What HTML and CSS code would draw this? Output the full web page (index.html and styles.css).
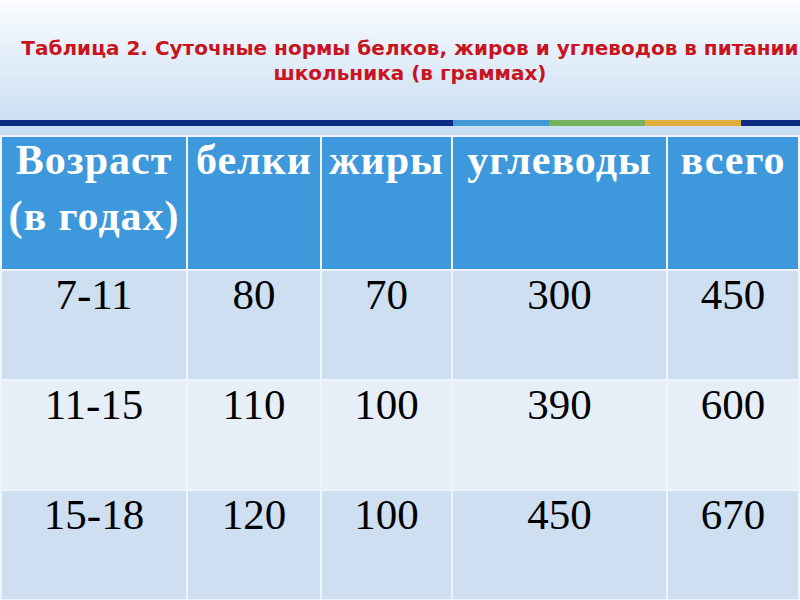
FILE: index.html
```html
<!DOCTYPE html>
<html lang="ru">
<head>
<meta charset="utf-8">
<title>Таблица 2</title>
<link rel="stylesheet" href="styles.css">
</head>
<body>
<div class="slide">
  <header class="top">
    <h1 class="title">Таблица 2. Суточные нормы белков, жиров и углеводов в питании<br>школьника (в граммах)</h1>
    <div class="stripe">
      <span class="seg navy1"></span>
      <span class="seg sky"></span>
      <span class="seg green"></span>
      <span class="seg gold"></span>
      <span class="seg navy2"></span>
    </div>
  </header>
  <table class="norms">
    <colgroup>
      <col class="c1"><col class="c2"><col class="c3"><col class="c4"><col class="c5">
    </colgroup>
    <thead>
      <tr class="head">
        <th><div class="hd">Возраст<br>(в годах)</div></th>
        <th><div class="hd">белки</div></th>
        <th><div class="hd">жиры</div></th>
        <th><div class="hd">углеводы</div></th>
        <th><div class="hd">всего</div></th>
      </tr>
    </thead>
    <tbody>
      <tr class="dark">
        <td>7-11</td><td>80</td><td>70</td><td>300</td><td>450</td>
      </tr>
      <tr class="light">
        <td>11-15</td><td>110</td><td>100</td><td>390</td><td>600</td>
      </tr>
      <tr class="dark">
        <td>15-18</td><td>120</td><td>100</td><td>450</td><td>670</td>
      </tr>
    </tbody>
  </table>
</div>
</body>
</html>
```

FILE: styles.css
```css
html, body {
  margin: 0;
  padding: 0;
}
body {
  width: 800px;
  height: 600px;
  overflow: hidden;
  background: #c8def3;
}
.slide {
  width: 800px;
  height: 600px;
  display: flex;
  flex-direction: column;
  background: linear-gradient(to bottom, #fbfdff 0px, #e8f1fa 45px, #cfe2f4 110px, #c8def3 135px, #c8def3 600px);
}
.top {
  height: 133px;
  display: flex;
  flex-direction: column;
  flex: none;
}
.title {
  margin: 0;
  padding: 36px 0 0 20px;
  height: 120px;
  box-sizing: border-box;
  flex: none;
  text-align: center;
  font-family: "DejaVu Sans", Verdana, sans-serif;
  font-weight: bold;
  font-size: 20px;
  line-height: 25px;
  color: #c8141e;
}
.stripe {
  display: flex;
  height: 6px;
  flex: none;
}
.seg { display: block; height: 6px; }
.navy1 { width: 453px; background: #0b2a82; }
.sky { width: 96px; background: #419ad6; }
.green { width: 96px; background: #76b15b; }
.gold { width: 96px; background: #e0ac3a; }
.navy2 { flex: 1; background: #0b2a82; }

.norms {
  flex: none;
  table-layout: fixed;
  width: 800px;
  border-collapse: separate;
  border-spacing: 2px;
  background: #eef4fb;
  margin-top: 2px;
}
.c1 { width: 184px; }
.c2 { width: 132px; }
.c3 { width: 129px; }
.c4 { width: 213px; }
.c5 { width: 130px; }

.norms th, .norms td {
  padding: 0;
  vertical-align: top;
  text-align: center;
}
.head th {
  height: 132px;
  background: #3e98dc;
  color: #ffffff;
  font-family: "Liberation Serif", "Times New Roman", serif;
  font-weight: bold;
  font-size: 42px;
  letter-spacing: 1px;
}
.hd {
  line-height: 56px;
  margin-top: -5px;
}
.norms td {
  height: 108px;
  padding-top: 0;
  box-sizing: border-box;
  font-family: "Liberation Serif", "Times New Roman", serif;
  font-size: 43px;
  line-height: 48px;
  color: #000000;
}
.dark td { background: #cddff1; }
.light td { background: #e6eef8; }
```
